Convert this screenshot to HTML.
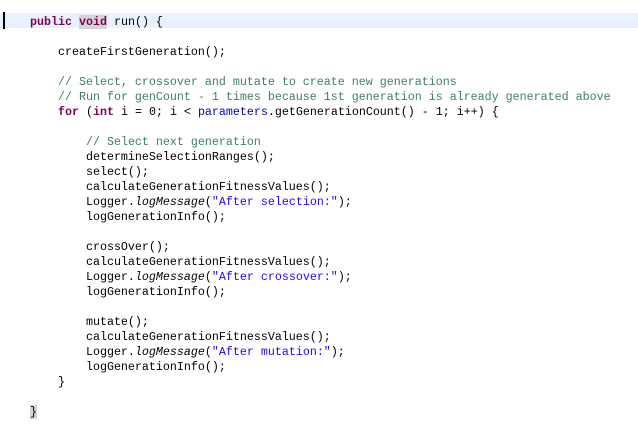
<!DOCTYPE html>
<html><head><style>
html,body{margin:0;padding:0;background:#fff;width:638px;height:429px;overflow:hidden}
pre{margin:0;position:absolute;left:30px;top:15px;font-family:"Liberation Mono",monospace;font-size:11.67px;line-height:15px;color:#000}
.hl{position:absolute;left:0;top:13px;width:638px;height:15px;background:#e8f2fe}
.bar{position:absolute;left:3px;top:12px;width:2px;height:17px;background:#000}
.k{color:#7f0055;font-weight:bold}
.c{color:#3f7f5f}
.s{color:#2a00ff}
.f{color:#0000c0}
.i{font-style:italic}
.g{background:#d4d4d4}
</style></head><body>
<div class="hl"></div><div class="bar"></div>
<pre><span class="k">public</span> <span class="k g">void</span> run() {

    createFirstGeneration();

    <span class="c">// Select, crossover and mutate to create new generations</span>
    <span class="c">// Run for genCount - 1 times because 1st generation is already generated above</span>
    <span class="k">for</span> (<span class="k">int</span> i = 0; i &lt; <span class="f">parameters</span>.getGenerationCount() - 1; i++) {

        <span class="c">// Select next generation</span>
        determineSelectionRanges();
        select();
        calculateGenerationFitnessValues();
        Logger.<span class="i">logMessage</span>(<span class="s">"After selection:"</span>);
        logGenerationInfo();

        crossOver();
        calculateGenerationFitnessValues();
        Logger.<span class="i">logMessage</span>(<span class="s">"After crossover:"</span>);
        logGenerationInfo();

        mutate();
        calculateGenerationFitnessValues();
        Logger.<span class="i">logMessage</span>(<span class="s">"After mutation:"</span>);
        logGenerationInfo();
    }

<span class="g">}</span></pre>
</body></html>
